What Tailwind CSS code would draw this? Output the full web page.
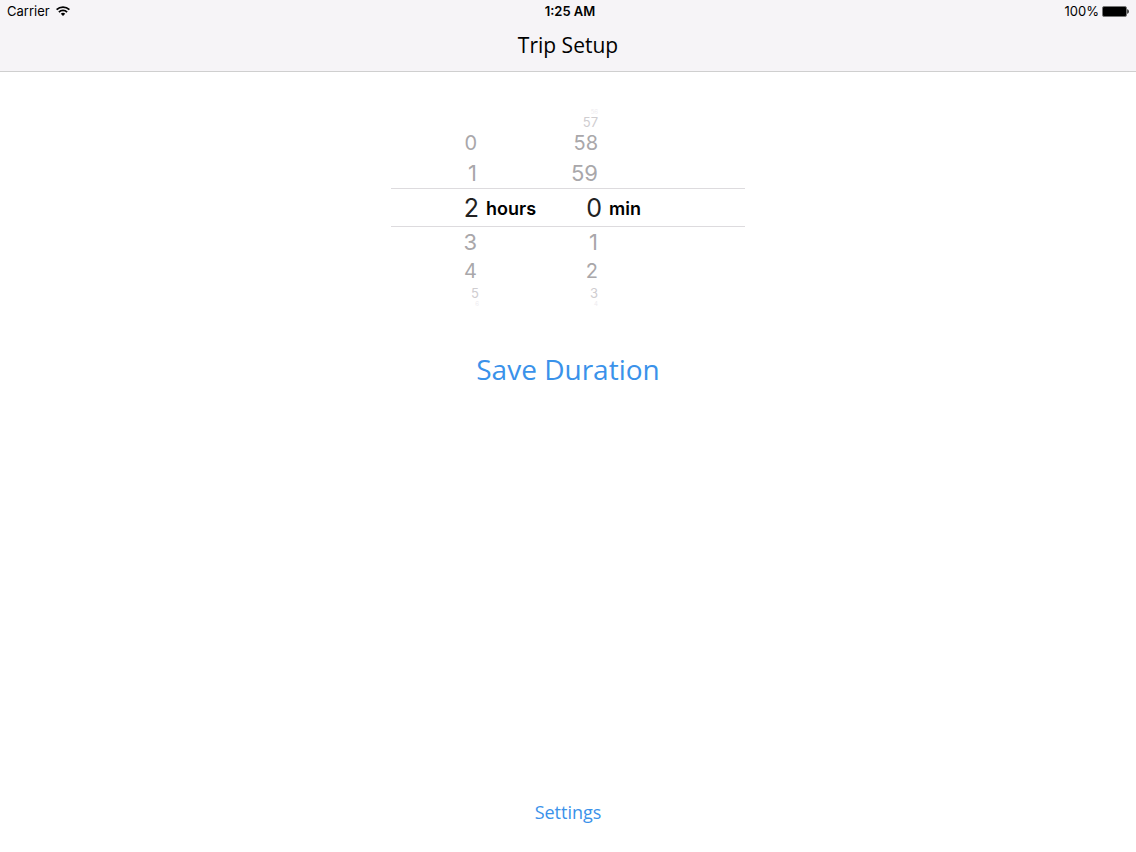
<!DOCTYPE html>
<html lang="en">
<head>
  <meta charset="UTF-8" />
  <meta name="viewport" content="width=device-width, initial-scale=1" />
  <title>Trip Setup</title>
  <script src="https://cdn.jsdelivr.net/npm/@tailwindcss/browser@4"></script>
</head>
<body class="min-h-screen flex flex-col bg-white text-black font-['Inter',sans-serif]">
  <!-- Header -->
  <header class="bg-[#f6f4f7] border-b border-[#cfcfcf] pb-2">
    <!-- Status bar -->
    <div class="grid grid-cols-3 items-center h-[22px] px-[7px] text-[13px] leading-[22px]">
      <div class="flex items-center gap-[6px]">
        <span>Carrier</span>
        <svg class="w-[14px] h-[10px]" viewBox="0 0 14 10" fill="none" stroke="#000" stroke-width="1.8" aria-hidden="true">
          <path d="M.6 3.7C4.2.2 9.8.2 13.4 3.7" />
          <path d="M2.9 6.1C5.2 3.9 8.8 3.9 11.1 6.1" />
          <path d="M7 9.9 4.8 7.7C6 6.5 8 6.5 9.2 7.7Z" fill="#000" stroke="none" />
        </svg>
      </div>
      <span class="text-center font-semibold ml-1">1:25 AM</span>
      <div class="flex items-center justify-end gap-[3px]">
        <span>100%</span>
        <svg class="w-[27px] h-[11px]" viewBox="0 0 27 11" aria-hidden="true">
          <rect x=".5" y=".5" width="24" height="10" rx="1.5" fill="#000" stroke="#777" />
          <path d="M25.3 3.2c1.9.5 1.9 4.1 0 4.6z" fill="#000" />
        </svg>
      </div>
    </div>
    <h1 class="h-[41px] leading-[47px] text-center text-[21px] font-['Trebuchet_MS','Open_Sans',sans-serif]">Trip Setup</h1>
  </header>

  <main class="flex-1 flex flex-col items-center pt-9">
    <!-- Duration picker -->
    <div class="flex w-[354px] max-w-full text-[#a9a7aa]">
      <ul class="w-[155px] shrink-0 pt-[21px]" role="listbox" aria-label="Hours">
        <li class="h-[29px] leading-[29px] w-[86px] text-right text-xl" role="option">0</li>
        <li class="h-[30px] leading-[30px] w-[86px] text-right text-[22px]" role="option">1</li>
        <li class="h-[39px] leading-[38px] border-y border-[#dddbde] flex items-center text-black" role="option" aria-selected="true">
          <span class="w-[88px] shrink-0 text-right text-[25px] text-[#222]">2</span>
          <span class="ml-[7px] mt-[2px] text-lg font-semibold">hours</span>
        </li>
        <li class="h-[30px] leading-[30px] w-[86px] text-right text-[22px]" role="option">3</li>
        <li class="h-[29px] leading-[29px] w-[86px] text-right text-xl" role="option">4</li>
        <li class="h-[14px] leading-[14px] w-[88px] text-right text-[13px] text-[#cfcdd0]" role="option">5</li>
        <li class="h-[7px] leading-[7px] w-[88px] text-right text-[6px] text-[#eeecef]" role="option">6</li>
      </ul>
      <ul class="flex-1" role="listbox" aria-label="Minutes">
        <li class="h-[7px] leading-[7px] w-[52px] text-right text-[6px] text-[#eeecef]" role="option">56</li>
        <li class="h-[14px] leading-[14px] w-[52px] text-right text-[13px] text-[#cfcdd0]" role="option">57</li>
        <li class="h-[29px] leading-[29px] w-[52px] text-right text-xl" role="option">58</li>
        <li class="h-[30px] leading-[30px] w-[52px] text-right text-[22px]" role="option">59</li>
        <li class="h-[39px] leading-[38px] border-y border-[#dddbde] flex items-center text-black" role="option" aria-selected="true">
          <span class="w-14 shrink-0 text-right text-[25px] text-[#222]">0</span>
          <span class="ml-[7px] mt-[2px] text-lg font-semibold">min</span>
        </li>
        <li class="h-[30px] leading-[30px] w-[52px] text-right text-[22px]" role="option">1</li>
        <li class="h-[29px] leading-[29px] w-[52px] text-right text-xl" role="option">2</li>
        <li class="h-[14px] leading-[14px] w-[52px] text-right text-[13px] text-[#cfcdd0]" role="option">3</li>
        <li class="h-[7px] leading-[7px] w-[52px] text-right text-[6px] text-[#eeecef]" role="option">4</li>
      </ul>
    </div>

    <button type="button" class="mt-[42px] h-10 leading-10 text-[28px] text-[#3a92ea] font-['Trebuchet_MS','Open_Sans',sans-serif]">Save Duration</button>
    <button type="button" class="mt-auto mb-[26px] h-7 leading-7 text-lg text-[#3a92ea] font-['Trebuchet_MS','Open_Sans',sans-serif]">Settings</button>
  </main>
</body>
</html>
